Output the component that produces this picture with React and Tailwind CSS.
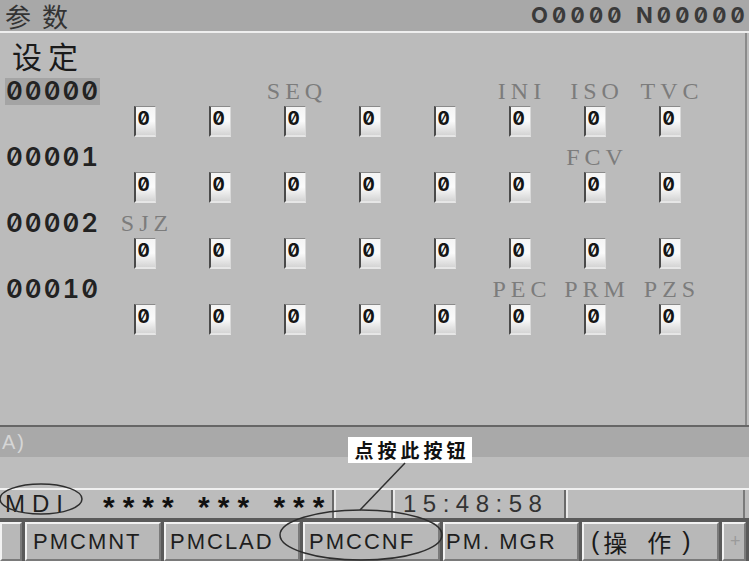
import React from "react";

const rows = [
  { num: "00000", hl: true, labels: { 2: "SEQ", 5: "INI", 6: "ISO", 7: "TVC" } },
  { num: "00001", labels: { 6: "FCV" } },
  { num: "00002", labels: { 0: "SJZ" } },
  { num: "00010", labels: { 5: "PEC", 6: "PRM", 7: "PZS" } },
];

const cols = [0, 1, 2, 3, 4, 5, 6, 7];

function Box() {
  return (
    <div className="w-[22px] h-[31px] mt-[1px] border-l-2 border-l-[#4a4a4a] border-t border-t-[#8a8a8a] border-r border-r-[#d8d8d8] border-b-2 border-b-[#e6e6e6] bg-gradient-to-b from-[#f4f4f4] via-[#fbfbfb] to-[#d4d4d4] flex items-start pl-[2px] pt-[2px]">
      <span className="font-['Inter',sans-serif] font-bold text-[19px] leading-[20px] text-[#151515] slashed-zero tabular-nums">0</span>
    </div>
  );
}

function Btn({ w, children, pl = "pl-[4px]" }) {
  return (
    <div
      className={`${w} h-full shrink-0 bg-[#b8b8b8] border-t-2 border-l-2 border-t-[#f2f2f2] border-l-[#f2f2f2] border-r-2 border-r-[#7a7a7a] border-b-2 border-b-[#7a7a7a] flex items-center ${pl} font-['Liberation_Sans','Noto_Sans_CJK_SC',sans-serif] text-[22px] tracking-[2px] text-[#1e1e1e] whitespace-nowrap overflow-hidden`}
    >
      {children}
    </div>
  );
}

export default function App() {
  return (
    <div className="w-[749px] h-[561px] bg-[#bdbdbd] relative overflow-hidden font-['Liberation_Sans','Noto_Sans_CJK_SC',sans-serif]">
      {/* top bar */}
      <div className="h-[31px] bg-[#a8a8a8] flex items-center justify-between pl-[5px] pr-[4px]">
        <span className="font-['Noto_Sans_CJK_SC',sans-serif] text-[26px] leading-[31px] tracking-[11px] text-[#333]">参数</span>
        <span className="font-['Inter',sans-serif] font-bold text-[22px] leading-[31px] tracking-[4.2px] text-[#3a3a3a] slashed-zero tabular-nums mr-[-4px]">O0000 N00000</span>
      </div>
      <div className="h-[2px] bg-[#eeeeee]" />

      {/* main */}
      <div className="h-[392px] w-[747px] bg-[#bbbbbb] border-r-2 border-r-[#8a8a8a]">
        <div className="h-[44px] flex items-center pl-[12px]">
          <span className="font-['Noto_Sans_CJK_SC',sans-serif] text-[30px] leading-[44px] tracking-[6px] text-[#1a1a1a]">设定</span>
        </div>
        {rows.map((r) => (
          <div key={r.num} className="h-[66px]">
            <div className="h-[28px] flex items-center">
              <div className="w-[107px] shrink-0 pl-[5px] h-full flex items-center">
                <span
                  className={`h-[27px] flex items-center pl-[1px] font-['Inter',sans-serif] font-semibold text-[26px] leading-none tracking-[2px] text-[#222] slashed-zero tabular-nums ${r.hl ? "bg-[#a4a4a4]" : ""}`}
                >
                  {r.num}
                </span>
              </div>
              <div className="grid grid-cols-[repeat(8,75px)] h-full">
                {cols.map((c) => (
                  <div key={c} className="flex items-center justify-center">
                    {r.labels[c] && (
                      <span className="font-['Liberation_Serif',serif] text-[24px] leading-none tracking-[5px] pl-[5px] text-[#7c7c7c]">
                        {r.labels[c]}
                      </span>
                    )}
                  </div>
                ))}
              </div>
            </div>
            <div className="h-[38px] pl-[107px] grid grid-cols-[repeat(8,75px)]">
              {cols.map((c) => (
                <div key={c} className="flex justify-center items-start">
                  <Box />
                </div>
              ))}
            </div>
          </div>
        ))}
      </div>
      <div className="h-[2px] bg-[#666]" />

      {/* input line */}
      <div className="h-[30px] bg-[#a9a9a9] flex items-center pl-[2px]">
        <span className="text-[20px] leading-none text-[#d6d6d6] tracking-[2px]">A)</span>
      </div>
      <div className="h-[31px] bg-[#bdbdbd]" />

      {/* status line */}
      <div className="h-[30px] flex bg-[#bcbcbc] border-t-2 border-t-[#f0f0f0]">
        <div className="w-[334px] shrink-0 flex items-center border-r-2 border-r-[#6a6a6a]">
          <span className="w-[103px] shrink-0 pl-[5px] text-[24px] leading-none tracking-[7px] text-[#1e1e1e]">MDI</span>
          <span className="font-bold text-[30px] leading-none tracking-[8px] text-[#111] whitespace-pre translate-y-[3px]">**** *** ***</span>
        </div>
        <div className="w-[59px] shrink-0 border-l-2 border-l-[#eaeaea] border-r-2 border-r-[#6a6a6a]" />
        <div className="w-[173px] shrink-0 border-l-2 border-l-[#eaeaea] border-r-2 border-r-[#6a6a6a] flex items-center pl-[8px]">
          <span className="text-[24px] leading-none tracking-[6.5px] text-[#333]">15:48:58</span>
        </div>
        <div className="w-[179px] shrink-0 border-l-2 border-l-[#eaeaea] border-r-2 border-r-[#7a7a7a]" />
      </div>
      <div className="h-[4px] bg-[#5a5a5a]" />

      {/* soft keys */}
      <div className="h-[39px] flex gap-[3px] bg-[#5a5a5a]">
        <Btn w="w-[22px]" />
        <Btn w="w-[136px]" pl="pl-[6px]">PMCMNT</Btn>
        <Btn w="w-[136px]">PMCLAD</Btn>
        <Btn w="w-[137px]">PMCCNF</Btn>
        <Btn w="w-[136px]" pl="pl-[1px]">PM. MGR</Btn>
        <Btn w="w-[137px]" pl="pl-[7px]">
          <span className="flex items-center text-[25px] tracking-normal text-[#1a1a1a]">
            <span>(</span>
            <span className="ml-[4px] font-['Noto_Sans_CJK_SC',sans-serif] text-[24px]">操</span>
            <span className="ml-[20px] font-['Noto_Sans_CJK_SC',sans-serif] text-[24px]">作</span>
            <span className="ml-[11px]">)</span>
          </span>
        </Btn>
        <Btn w="w-[24px]" pl="pl-[6px]">
          <span className="text-[#9a9a9a] text-[18px]">+</span>
        </Btn>
      </div>

      {/* annotation */}
      <div className="absolute left-[348px] top-[437px] w-[124px] h-[26px] bg-white flex items-center justify-center">
        <span className="font-['Noto_Sans_CJK_SC',sans-serif] font-bold text-[19px] leading-[26px] tracking-[4px] pl-[4px] text-[#111]">点按此按钮</span>
      </div>
      <svg className="absolute left-0 top-0 pointer-events-none" width="749" height="561" viewBox="0 0 749 561">
        <ellipse cx="41" cy="499" rx="41" ry="15" fill="none" stroke="#2e2e2e" strokeWidth="1.5" />
        <ellipse cx="361" cy="535" rx="81" ry="25" fill="none" stroke="#2e2e2e" strokeWidth="1.5" />
        <line x1="405" y1="463" x2="360" y2="510" stroke="#2e2e2e" strokeWidth="1.5" />
      </svg>
    </div>
  );
}
